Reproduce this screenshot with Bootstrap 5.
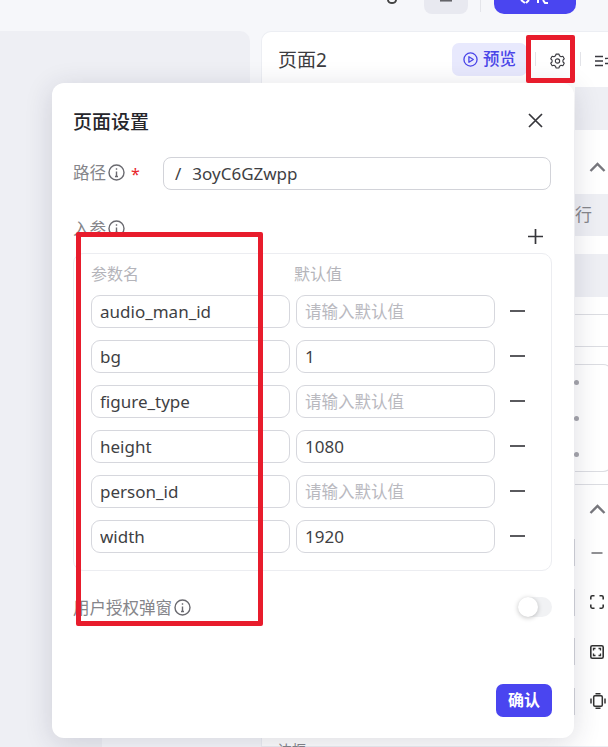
<!DOCTYPE html>
<html lang="zh">
<head>
<meta charset="utf-8">
<title>页面设置</title>
<link rel="stylesheet" href="https://cdn.jsdelivr.net/npm/bootstrap@5.3.0/dist/css/bootstrap.min.css">
<style>
html,body{height:100%;margin:0}
body{font-family:"Noto Sans","Noto Sans CJK SC",sans-serif;background:#f6f7fa;color:#3a3a40;overflow:hidden}
.stage{position:relative;width:608px;height:747px;overflow:hidden}
.topbar{height:31px;position:relative}
.top-inner{height:14px;padding-left:387px}
.top-dot{width:10px;height:14px;color:#444;align-self:flex-start}
.top-gray{width:44px;height:14px;background:#e8e9f0;border-radius:0 0 8px 8px;margin-left:27px;color:#55555a}
.top-sep{width:1px;height:12px;background:#e4e5ea;margin-left:12px;align-self:flex-start}
.top-blue{width:82px;height:14px;background:#4a45f0;border-radius:0 0 10px 10px;margin-left:13px}
.top-gray svg,.top-blue svg,.top-dot svg{display:block;margin:0 auto}
.main-row{height:716px;gap:11px}
.left-pane{width:250px;background:#eeeff4;border-radius:0 10px 0 0;flex:none}
.left-foot{height:12px;margin-left:102px;background:#f7f8fb}
.right-pane{width:360px;flex:none;background:#fff;border-radius:10px 0 0 0;border:1px solid #eceef3;border-right:0;position:relative}
.pane-head{height:54px;padding:0 0 0 16px}
.pane-title{font-size:19px;color:#3c3c40;width:174px;padding-top:2px}
.preview-btn{width:75px;height:33px;background:#e8e9fd;color:#4a45e8;border-radius:7px;font-size:16.5px;font-weight:500;gap:5px;flex:none}
.sep{width:1px;height:14px;background:#e2e3e8;flex:none}
.head-gear{width:44px;flex:none;color:#3a3a40;padding-top:3px;padding-right:2px}
.head-menu{margin-left:14px;color:#3a3a40}
.pane-body{padding-left:313px;font-size:17px;color:#86868b}
.gray-bar{height:43px;background:#eeeff4;border-radius:0 10px 10px 0}
.b1{margin-top:1px}
.chev-a{height:64px;padding-top:10px}
.chev-a svg,.chev-b svg{margin-left:14px}
.b2{height:42px;line-height:42px}
.b3{margin-top:18px}
.hair{height:1px;background:#dcdde2}
.hair-a{margin-top:17px}
.hair-b{margin-top:31px}
.hair-c{margin-top:12px}
.dots{height:108px;margin-top:17px;border:1px solid #dcdde2;border-left:0;border-radius:0 10px 10px 0;padding-top:15px;gap:31px;margin-right:8px}
.dot1{width:5px;height:5px;background:#a6a6ac;border-radius:50%;margin-left:-1px}
.chev-b{height:48px}
.tool-list{margin-top:-5px}
.tool-ic{height:49.5px;color:#333}
.tool-ic::before{content:"";width:1px;height:27px;background:#d5d6dc;margin-left:-1px;margin-right:15px;flex:none}
.tool-ic svg{display:block}
.dialog-card{position:absolute;left:52px;top:83px;width:522px;height:655px;background:#fff;border-radius:12px;box-shadow:0 5px 28px rgba(40,40,70,.16);padding:0 22px 0 21px;z-index:5}
.dlg-title{font-size:19px;font-weight:500;color:#26262b;height:78px}
.fld-label{font-size:16.5px;color:#85858a;gap:2px}
.info-ic{flex:none;color:#6a6a70;margin-top:-2px}
.star{color:#e8262c;font-size:16px;margin-left:6px;width:33px}
.path-box{width:388px;height:33px;border:1px solid #d2d3d9;border-radius:8px;font-size:17px;padding-left:11px;gap:11px;color:#3f3f44;flex:none;margin-left:-1px}
.path-row{height:33px;margin-top:-4px}
.params-head{height:64px;padding-top:27px;position:relative}
.plus-btn{position:absolute;right:1px;top:39px;color:#36363b;line-height:0}
.params-box{width:479px;height:318px;border:1px solid #ecedf1;border-radius:10px;padding:3px 17px;margin-top:-1px}
.col-heads{height:33px;color:#b4b4ba;font-size:16px;gap:4px}
.col-heads>div{width:199px}
.col-gap{height:5px}
.pr-row{height:33px;margin-bottom:12px;gap:6px}
.pr-input.form-control{width:199px;height:33px;min-height:0;font-size:17px;padding:0 8px;border:1px solid #d6d7dd;border-radius:9px;color:#3f3f44;flex:none;font-family:inherit;line-height:1}
.pr-input.form-control::placeholder{color:#b9b9bf;opacity:1;font-size:16.5px}
.minus-ic{margin-left:9px;line-height:0;color:#3d3d42;margin-top:-2px}
.auth-row{margin-top:25px;height:24px}
.toggle-track{width:34px;height:20px;background:#f1f2f4;border-radius:10px;position:relative;margin-left:auto;margin-top:-3px}
.toggle-knob{position:absolute;left:0;top:0;width:20px;height:20px;background:#fff;border-radius:50%;box-shadow:0 1px 5px rgba(0,0,0,.24)}
.ok-btn.btn{position:absolute;right:22px;bottom:21px;width:56px;height:33px;background:#4a45f0;color:#fff;border:0;border-radius:7px;font-size:16px;font-weight:700;padding:0;line-height:33px}
.close-ic{margin-right:9px;margin-top:-3px}
.dlg-title span{margin-top:0}
.red-mark{position:absolute;border:5px solid #e81c2c;border-radius:2px;z-index:9;pointer-events:none}
.mark-a{left:526px;top:35px;width:49px;height:48px}
.mark-b{left:76px;top:232px;width:187px;height:394px}
.bottom-label{position:absolute;left:278px;top:742px;font-size:14px;color:#85858a;line-height:16px;z-index:1}
</style>
</head>
<body>
<div class="stage">
  <div class="topbar">
    <div class="top-inner d-flex align-items-end">
      <div class="top-dot"><svg width="10" height="4" viewBox="0 0 10 4"><path d="M1 0a4 3 0 0 0 8 0" fill="none" stroke="currentColor" stroke-width="2"/></svg></div>
      <div class="top-gray"><svg width="12" height="3" viewBox="0 0 12 3"><path d="M0 .8h12" stroke="currentColor" stroke-width="1.400"/></svg></div>
      <div class="top-sep"></div>
      <div class="top-blue"><svg width="32" height="4" viewBox="0 0 32 4"><path d="M2 0 6 3M10 0 7 3M19 0v3M24 0l2 3 3 0" fill="none" stroke="#fff" stroke-width="2"/></svg></div>
    </div>
  </div>
  <div class="main-row d-flex">
    <div class="left-pane d-flex flex-column justify-content-end"><div class="left-foot"></div></div>
    <div class="right-pane">
      <div class="pane-head d-flex align-items-center">
        <div class="pane-title">页面2</div>
        <div class="preview-btn d-flex align-items-center justify-content-center">
          <svg width="15" height="15" viewBox="0 0 16 16" fill="none" stroke="currentColor" stroke-width="1.400"><circle cx="8" cy="8" r="7"/><path d="M6.300 5v6l4.700-3z" stroke-linejoin="round"/></svg>
          <span>预览</span>
        </div>
        <div class="sep ms-2"></div>
        <div class="head-gear d-flex justify-content-center">
          <svg width="15" height="16" viewBox="0 0 16 16" fill="none" stroke="currentColor" stroke-width="1.200" stroke-linejoin="round"><path d="M6.400 1h3.200l.5 1.900 1.700 1 1.900-.5 1.500 2.600-1.400 1.400v2l1.400 1.400-1.500 2.600-1.900-.5-1.700 1-.5 1.900H6.400l-.5-1.900-1.700-1-1.900.5L.8 10.800l1.400-1.400v-2L.8 6l1.500-2.600 1.900.5 1.700-1z" transform="translate(0 -.4)"/><circle cx="8" cy="8" r="2.300"/></svg>
        </div>
        <div class="sep"></div>
        <div class="head-menu">
          <svg width="16" height="12" viewBox="0 0 16 12" fill="none" stroke="currentColor" stroke-width="1.300"><path d="M0 1.500h8M0 6h8M0 10.500h8M10 3.500l4-.1M10 8.500h4"/></svg>
        </div>
      </div>
      <div class="pane-body">
        <div class="gray-bar b1"></div>
        <div class="chev-a d-flex align-items-center">
          <svg width="17" height="10" viewBox="0 0 17 10" fill="none" stroke="#77777d" stroke-width="2.400"><path d="M1.500 9 8.500 2l7 7"/></svg>
        </div>
        <div class="gray-bar b2">行</div>
        <div class="gray-bar b3"></div>
        <div class="hair hair-a"></div>
        <div class="hair hair-b"></div>
        <div class="dots d-flex flex-column">
          <div class="dot1"></div><div class="dot1"></div><div class="dot1"></div>
        </div>
        <div class="hair hair-c"></div>
        <div class="chev-b d-flex align-items-center">
          <svg width="17" height="10" viewBox="0 0 17 10" fill="none" stroke="#77777d" stroke-width="2.400"><path d="M1.500 9 8.500 2l7 7"/></svg>
        </div>
        <div class="tool-list">
          <div class="tool-ic d-flex align-items-center"><svg width="14" height="14" viewBox="0 0 14 14"><path d="M1.500 7h11" stroke="#55555a" stroke-width="1.300"/></svg></div>
          <div class="tool-ic d-flex align-items-center"><svg width="14" height="14" viewBox="0 0 14 14" fill="none" stroke="currentColor" stroke-width="1.600"><path d="M.8 4.500V2.200A1.500 1.500 0 0 1 2.200.8h2.300M9.500.8h2.300a1.500 1.500 0 0 1 1.400 1.400v2.300M13.200 9.500v2.300a1.500 1.500 0 0 1-1.400 1.400H9.500M4.500 13.200H2.200a1.500 1.500 0 0 1-1.400-1.400V9.500"/></svg></div>
          <div class="tool-ic d-flex align-items-center"><svg width="14" height="14" viewBox="0 0 14 14" fill="none" stroke="currentColor" stroke-width="1.600"><rect x=".8" y=".8" width="12.400" height="12.400" rx="1.500"/><path d="M3.500 5.500v-2h2M8.500 3.500h2v2M10.500 8.500v2h-2M5.500 10.500h-2v-2" stroke-width="1.300"/></svg></div>
          <div class="tool-ic d-flex align-items-center"><svg width="16" height="16" viewBox="0 0 16 16" fill="none" stroke="currentColor" stroke-width="1.500"><rect x="3.700" y="2.700" width="8.600" height="10.600" rx="1.200"/><path d="M1 5.500v5M15 5.500v5M5.500.7h5M5.500 15.300h5"/></svg></div>
        </div>
      </div>
    </div>
  </div>

  <div class="bottom-label">边框</div>

  <div class="dialog-card">
    <div class="dlg-title d-flex align-items-center justify-content-between">
      <span>页面设置</span>
      <svg class="close-ic" width="15" height="15" viewBox="0 0 15 15" fill="none" stroke="#36363b" stroke-width="1.700"><path d="M1 1l13 13M14 1 1 14"/></svg>
    </div>
    <div class="path-row d-flex align-items-center">
      <div class="fld-label d-flex align-items-center">
        <span>路径</span>
        <svg class="info-ic" width="17" height="17" viewBox="0 0 17 17" fill="none" stroke="currentColor" stroke-width="1.400"><circle cx="8.500" cy="8.500" r="7.500"/><path d="M8.500 7.500v5M7 12.500h3M8.500 4.300v1.400"/></svg>
      </div>
      <span class="star">*</span>
      <div class="path-box d-flex align-items-center"><span>/</span><span>3oyC6GZwpp</span></div>
    </div>
    <div class="params-head">
      <div class="fld-label d-flex align-items-center">
        <span>入参</span>
        <svg class="info-ic" width="17" height="17" viewBox="0 0 17 17" fill="none" stroke="currentColor" stroke-width="1.400"><circle cx="8.500" cy="8.500" r="7.500"/><path d="M8.500 7.500v5M7 12.500h3M8.500 4.300v1.400"/></svg>
      </div>
      <span class="plus-btn me-2"><svg width="15" height="15" viewBox="0 0 15 15" fill="none" stroke="currentColor" stroke-width="1.700"><path d="M7.500 0v15M0 7.500h15"/></svg></span>
    </div>
    <div class="params-box">
      <div class="col-heads d-flex align-items-center"><div>参数名</div><div>默认值</div></div>
      <div class="col-gap"></div>
      <div class="pr-row d-flex align-items-center"><input class="form-control pr-input" value="audio_man_id"><input class="form-control pr-input" placeholder="请输入默认值"><span class="minus-ic"><svg width="15" height="2" viewBox="0 0 15 2"><path d="M0 1h15" stroke="currentColor" stroke-width="1.700"/></svg></span></div>
      <div class="pr-row d-flex align-items-center"><input class="form-control pr-input" value="bg"><input class="form-control pr-input" value="1"><span class="minus-ic"><svg width="15" height="2" viewBox="0 0 15 2"><path d="M0 1h15" stroke="currentColor" stroke-width="1.700"/></svg></span></div>
      <div class="pr-row d-flex align-items-center"><input class="form-control pr-input" value="figure_type"><input class="form-control pr-input" placeholder="请输入默认值"><span class="minus-ic"><svg width="15" height="2" viewBox="0 0 15 2"><path d="M0 1h15" stroke="currentColor" stroke-width="1.700"/></svg></span></div>
      <div class="pr-row d-flex align-items-center"><input class="form-control pr-input" value="height"><input class="form-control pr-input" value="1080"><span class="minus-ic"><svg width="15" height="2" viewBox="0 0 15 2"><path d="M0 1h15" stroke="currentColor" stroke-width="1.700"/></svg></span></div>
      <div class="pr-row d-flex align-items-center"><input class="form-control pr-input" value="person_id"><input class="form-control pr-input" placeholder="请输入默认值"><span class="minus-ic"><svg width="15" height="2" viewBox="0 0 15 2"><path d="M0 1h15" stroke="currentColor" stroke-width="1.700"/></svg></span></div>
      <div class="pr-row d-flex align-items-center"><input class="form-control pr-input" value="width"><input class="form-control pr-input" value="1920"><span class="minus-ic"><svg width="15" height="2" viewBox="0 0 15 2"><path d="M0 1h15" stroke="currentColor" stroke-width="1.700"/></svg></span></div>
    </div>
    <div class="auth-row d-flex align-items-center">
      <div class="fld-label d-flex align-items-center">
        <span>用户授权弹窗</span>
        <svg class="info-ic" width="17" height="17" viewBox="0 0 17 17" fill="none" stroke="currentColor" stroke-width="1.400"><circle cx="8.500" cy="8.500" r="7.500"/><path d="M8.500 7.500v5M7 12.500h3M8.500 4.300v1.400"/></svg>
      </div>
      <div class="toggle-track"><div class="toggle-knob"></div></div>
    </div>
    <button class="btn ok-btn" type="button">确认</button>
  </div>

  <div class="red-mark mark-a"></div>
  <div class="red-mark mark-b"></div>
</div>
<script src="https://cdn.jsdelivr.net/npm/bootstrap@5.3.0/dist/js/bootstrap.bundle.min.js"></script>
</body>
</html>
